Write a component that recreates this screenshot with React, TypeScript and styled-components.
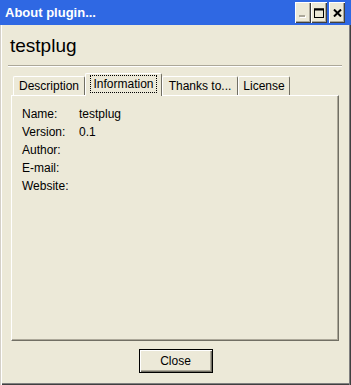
import React from "react";
import styled, { createGlobalStyle } from "styled-components";

const Global = createGlobalStyle`
  html, body { margin: 0; padding: 0; background: #ece9d8; }
  body { font-family: "Liberation Sans", Arial, sans-serif; font-size: 12px; color: #000; }
`;

const Window = styled.div`
  width: 351px;
  height: 385px;
  box-sizing: border-box;
  display: flex;
  flex-direction: column;
  background: #ece9d8;
  box-shadow: inset 1px 0 #d4d0c8, inset 2px 0 #ffffff, inset -1px 0 #404040,
    inset -2px 0 #808080, inset 0 -1px #404040, inset 0 -2px #808080;
`;

const TitleBar = styled.div`
  height: 25px;
  flex: none;
  display: flex;
  align-items: center;
  justify-content: space-between;
  padding: 0 6px 0 5px;
  background: #2f68e3;
  color: #fff;
`;

const TitleText = styled.span`
  font-weight: bold;
  font-size: 13px;
`;

const Controls = styled.div`
  display: flex;
  align-items: center;
`;

const CtrlButton = styled.div<{ $gap?: number }>`
  width: 16px;
  height: 21px;
  box-sizing: border-box;
  margin-left: ${(p) => p.$gap ?? 0}px;
  background: #ece9d8;
  display: flex;
  align-items: center;
  justify-content: center;
  box-shadow: inset 1px 1px #ffffff, inset -1px -1px #404040, inset -2px -2px #aca899;
`;

const Heading = styled.h1`
  margin: 10px 0 0 10px;
  font-size: 19px;
  line-height: 22px;
  font-weight: normal;
`;

const Separator = styled.div`
  margin: 8px 9px 0 8px;
  height: 0;
  border-top: 1px solid #aca899;
  border-bottom: 1px solid #ffffff;
`;

const TabArea = styled.div`
  flex: 1;
  display: flex;
  flex-direction: column;
  margin: 6px 12px 0 11px;
`;

const TabRow = styled.div`
  height: 22px;
  display: flex;
  align-items: flex-end;
  padding-left: 2px;
`;

const Tab = styled.div<{ $w: number; $active?: boolean }>`
  width: ${(p) => p.$w}px;
  height: ${(p) => (p.$active ? 23 : 19)}px;
  margin-bottom: ${(p) => (p.$active ? -1 : 0)}px;
  box-sizing: border-box;
  position: relative;
  z-index: ${(p) => (p.$active ? 1 : 0)};
  background: #ece9d8;
  border-top: 1px solid #ffffff;
  border-left: 1px solid #ffffff;
  border-right: 1px solid #716f64;
  border-radius: 2px 2px 0 0;
  display: flex;
  align-items: center;
  justify-content: center;
  padding-bottom: ${(p) => (p.$active ? 2 : 0)}px;
  white-space: nowrap;
`;

const FocusLabel = styled.span`
  outline: 1px dotted #000;
  outline-offset: 1px;
  padding: 0 1px;
`;

const Panel = styled.div`
  flex: 1;
  box-sizing: border-box;
  border-top: 1px solid #ffffff;
  border-left: 1px solid #ffffff;
  border-right: 1px solid #716f64;
  border-bottom: 1px solid #716f64;
  box-shadow: inset -1px -1px #aca899;
  padding: 9px 10px;
  display: grid;
  grid-template-columns: 57px 1fr;
  grid-auto-rows: 18px;
  align-content: start;
  align-items: center;
`;

const Footer = styled.div`
  display: flex;
  justify-content: center;
  padding: 8px 0 12px;
`;

const Button = styled.button`
  width: 74px;
  height: 24px;
  box-sizing: border-box;
  border: 1px solid #000;
  background: #ece9d8;
  font-family: "Liberation Sans", Arial, sans-serif;
  font-size: 12px;
  color: #000;
  padding: 0;
  box-shadow: inset 1px 1px #ffffff, inset -1px -1px #716f64, inset -2px -2px #aca899;
`;

const rows: [string, string][] = [
  ["Name:", "testplug"],
  ["Version:", "0.1"],
  ["Author:", ""],
  ["E-mail:", ""],
  ["Website:", ""],
];

export default function App() {
  return (
    <>
      <Global />
      <Window>
        <TitleBar>
          <TitleText>About plugin...</TitleText>
          <Controls>
            <CtrlButton>
              <svg width="8" height="12" viewBox="0 0 8 12">
                <rect x="1" y="9" width="6" height="2" fill="#ffffff" />
                <rect x="0" y="8" width="6" height="2" fill="#aca899" />
              </svg>
            </CtrlButton>
            <CtrlButton>
              <svg width="10" height="10" viewBox="0 0 10 10">
                <rect x="0.5" y="1" width="9" height="8.5" fill="none" stroke="#000" strokeWidth="1" />
                <rect x="0" y="0.5" width="10" height="2" fill="#000" />
              </svg>
            </CtrlButton>
            <CtrlButton $gap={2}>
              <svg width="9" height="8" viewBox="0 0 9 8">
                <path d="M1 0.5 L8 7.5 M8 0.5 L1 7.5" stroke="#000" strokeWidth="2" />
              </svg>
            </CtrlButton>
          </Controls>
        </TitleBar>
        <Heading>testplug</Heading>
        <Separator />
        <TabArea>
          <TabRow>
            <Tab $w={72}>Description</Tab>
            <Tab $w={77} $active>
              <FocusLabel>Information</FocusLabel>
            </Tab>
            <Tab $w={76}>Thanks to...</Tab>
            <Tab $w={52}>License</Tab>
          </TabRow>
          <Panel>
            {rows.map(([k, v]) => (
              <React.Fragment key={k}>
                <span>{k}</span>
                <span>{v}</span>
              </React.Fragment>
            ))}
          </Panel>
        </TabArea>
        <Footer>
          <Button>Close</Button>
        </Footer>
      </Window>
    </>
  );
}
